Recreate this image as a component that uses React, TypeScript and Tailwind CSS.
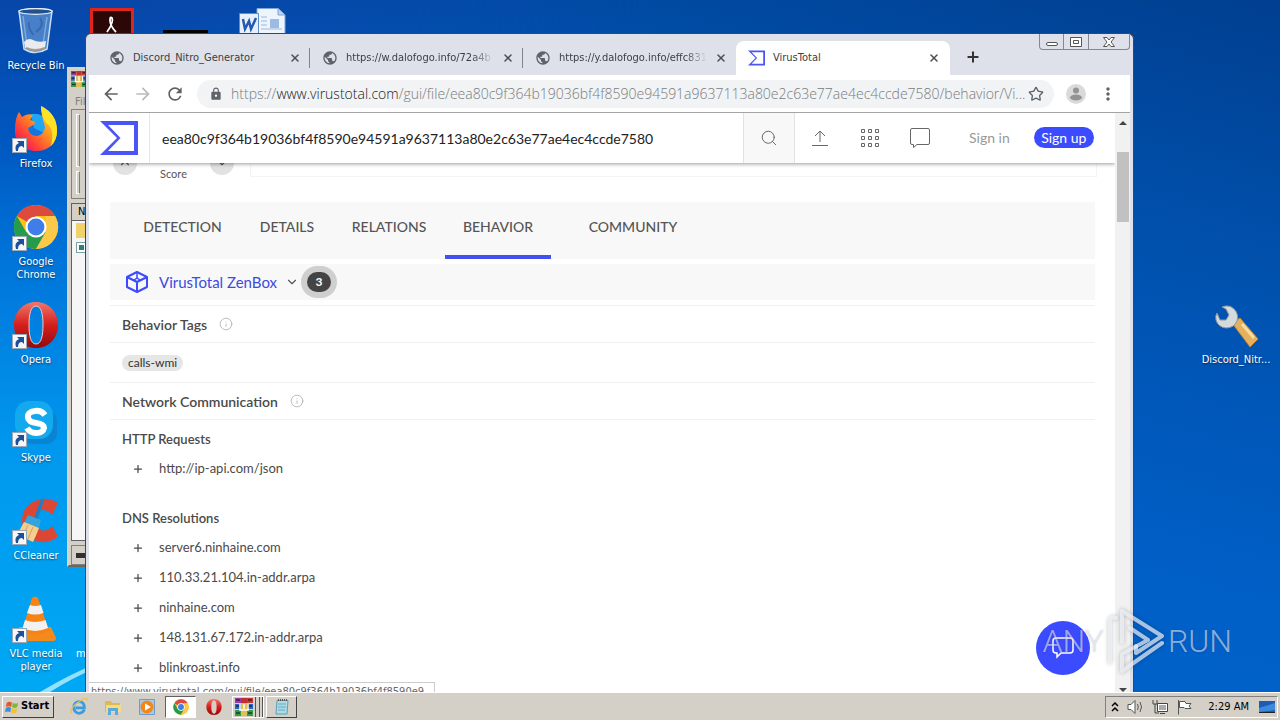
import type { ReactNode } from "react";
import { Star, ChevronDown, ChevronUp, X, Plus, Info, Search } from "lucide-react";
import { MdArrowBack, MdArrowForward, MdRefresh, MdLock, MdMoreVert, MdPublic } from "react-icons/md";

const HASH = "eea80c9f364b19036bf4f8590e94591a9637113a80e2c63e77ae4ec4ccde7580";

function VtLogo({ className }: { className: string }) {
  return (
    <svg viewBox="0 0 38 34" className={className} aria-hidden="true">
      <path d="M0 0H38V34H0L17 17ZM8 4 20.500 17 8 30H34V4Z" fill="#4b55f5" fillRule="evenodd" />
    </svg>
  );
}

function RecycleIcon() {
  return (
    <svg viewBox="0 0 44 46" className="h-[46px] w-11">
      <path d="M5 3 10 41Q21 48 33 41L38 3Q21 -2 5 3Z" fill="#5d93d2" fillOpacity=".75" stroke="#c9def2" strokeWidth="1.500" />
      <ellipse cx="21.500" cy="3.500" rx="16.500" ry="2.800" fill="#24508c" stroke="#e6f0fa" strokeWidth="1.200" />
      <path d="M9 8 13 38M33 9 29 37" stroke="#b6d2ee" strokeOpacity=".5" strokeWidth="1.500" />
      <path d="M26 10Q31 18 22 24M15 14Q14 22 20 27" fill="none" stroke="#2f5f9e" strokeOpacity=".6" strokeWidth="2" />
      <path d="M10 34Q14 29 19 32T32 33L31 40Q21 45 11 40Z" fill="#e9ecef" />
      <path d="M12 40Q21 44 31 40" stroke="#a89a88" strokeWidth="2" fill="none" />
    </svg>
  );
}

function FirefoxIcon() {
  return (
    <svg viewBox="0 0 44 46" className="h-[46px] w-11">
      <defs>
        <linearGradient id="ff" x1="1" y1="0" x2="0.100" y2="0.900">
          <stop offset="0" stopColor="#fff14a" />
          <stop offset=".45" stopColor="#ff9a1e" />
          <stop offset=".8" stopColor="#ff3a3c" />
          <stop offset="1" stopColor="#e8155e" />
        </linearGradient>
      </defs>
      <circle cx="22" cy="22" r="14" fill="#1673e0" />
      <path d="M17 8Q28 6 33 16L30 27 20 22Z" fill="#1fa7f5" />
      <path d="M27 0Q43 8 43 25C43 38 34 45 22 45C9 45 0 36 1 23Q1 12 5 6L8 11Q13 7 19 9L16 14Q22 15 21 18L14 22Q15 30 23 30Q30 29 31 21Q27 8 27 0Z" fill="url(#ff)" />
      <path d="M27 0Q43 8 43 25Q43 34 37 40Q41 22 32 17Q27 9 27 0Z" fill="#ffe226" />
    </svg>
  );
}

function ChromeIcon({ className }: { className: string }) {
  return (
    <svg viewBox="0 0 48 48" className={className}>
      <circle cx="24" cy="24" r="23" fill="#fbc116" />
      <path d="M24 24 4.080 12.500A23 23 0 0 1 43.920 12.500H24Z" fill="#dd4b3e" />
      <path d="M4.080 12.500A23 23 0 0 0 24 47L34 29.750 24 24 14 29.750Z" fill="#249c4c" />
      <path d="M43.920 12.500A23 23 0 0 1 24 47L34 29.750V12.500Z" fill="#fbc94a" />
      <circle cx="24" cy="24" r="11" fill="#fff" />
      <circle cx="24" cy="24" r="8.800" fill="#3f7de8" />
    </svg>
  );
}

function OperaIcon({ className }: { className: string }) {
  return (
    <svg viewBox="0 0 44 46" className={className}>
      <defs>
        <linearGradient id="op" x1="0" y1="0" x2="0" y2="1">
          <stop offset="0" stopColor="#f0766c" />
          <stop offset=".5" stopColor="#d41f1c" />
          <stop offset="1" stopColor="#930a0c" />
        </linearGradient>
      </defs>
      <path
        d="M22 0C35 0 44 10 44 23S35 46 22 46 0 36 0 23 9 0 22 0ZM22 4C16.500 4 15 13 15 23S16.500 42 22 42 29 33 29 23 27.500 4 22 4Z"
        fill="url(#op)"
        fillRule="evenodd"
      />
      <path d="M22 4C16.500 4 15 13 15 23S16.500 42 22 42 29 33 29 23 27.500 4 22 4Z" fill="none" stroke="#f6c9c4" />
    </svg>
  );
}

function SkypeIcon() {
  return (
    <svg viewBox="0 0 44 46" className="h-[46px] w-11">
      <rect x="8" y="10" width="35" height="34" rx="11" fill="#0a84d0" />
      <rect x="1" y="1" width="38" height="38" rx="14" fill="#12a9ee" />
      <path d="M31 15Q27 10 21 11Q13 12 14 18Q15 22 22 23Q30 24 30 28Q29 33 22 33Q16 33 13 28" fill="none" stroke="#fff" strokeWidth="6" />
    </svg>
  );
}

function CCleanerIcon() {
  return (
    <svg viewBox="0 0 44 46" className="h-[46px] w-11">
      <path d="M44 5Q36 0 27 1Q9 5 8 22Q9 42 27 44Q37 45 44 38L38 28Q33 34 27 32Q20 30 20 22Q21 13 28 12Q34 12 38 17Z" fill="#dc4635" />
      <path d="M28 3 22 20" stroke="#1e7fc4" strokeWidth="3.500" strokeLinecap="round" />
      <path d="M14 17 27 22 25 30 10 25Z" fill="#35a3dd" />
      <path d="M10 24 25 30Q22 38 19 44L2 36Q7 31 10 24Z" fill="#f5cf8e" />
      <path d="M14 27 9 38M19 29 14 41" stroke="#d4a45c" />
    </svg>
  );
}

function VlcIcon() {
  return (
    <svg viewBox="0 0 44 46" className="h-[46px] w-11">
      <path d="M5 31H37L42 42Q42 45 39 45H4Q1 45 1 42Z" fill="#f4891c" />
      <path d="M18 2Q21 -1 24 2L35 35Q21 42 8 35Z" fill="#f58316" />
      <path d="M16 9 13 17Q21 20 29.500 17L27 9Q21 11 16 9Z" fill="#f1f1f1" />
      <path d="M11 24 8.500 32Q21 38 34 32L31.500 24Q21 28 11 24Z" fill="#f1f1f1" />
    </svg>
  );
}

function ShortcutBadge() {
  return (
    <svg viewBox="0 0 15 15" className="absolute bottom-0 left-0 size-[15px]">
      <rect x=".5" y=".5" width="14" height="14" fill="#f4f6f8" stroke="#9aa8b8" />
      <path d="M4 13Q2 7 7 5L5 3H12V10L10 8Q6 8 6 13Z" fill="#1c4f9c" />
    </svg>
  );
}

function DesktopIcon({ label, badge, children }: { label: string; badge?: boolean; children: ReactNode }) {
  return (
    <button className="flex h-[98px] w-[72px] flex-col items-center gap-1 text-[11px] leading-[13px] text-white [text-shadow:0_1px_2px_#0008]">
      <span className="relative flex h-12 w-12 shrink-0 items-center justify-center">
        {children}
        {badge && <ShortcutBadge />}
      </span>
      <span className="w-[60px] text-center">{label}</span>
    </button>
  );
}

function RarIcon({ className }: { className: string }) {
  return (
    <svg viewBox="0 0 18 18" className={className}>
      <path d="M0 0h6v5H0z" fill="#9b3aa8" />
      <path d="M0 6h6v5H0z" fill="#2d63c8" />
      <path d="M0 12h6v6H0z" fill="#2f9e46" />
      <path d="M6 0h6v18H6z" fill="#e8bd4f" />
      <path d="M12 0h6v5h-6z" fill="#c23b3b" />
      <path d="M12 6h6v5h-6z" fill="#2d63c8" />
      <path d="M12 12h6v6h-6z" fill="#2f9e46" />
      <path d="M1 2h4M13 2h4M1 8h4M13 8h4M1 15h4M13 15h4" stroke="#111" />
      <path d="M5 6v6h8V6M9 6v5" stroke="#fff" fill="none" strokeWidth="1.500" />
      <path d="M6 0h6v5H6z" fill="#c0302d" />
    </svg>
  );
}

function ArchiveWindow() {
  return (
    <div className="absolute top-[67px] left-[67px] flex h-[500px] w-[30px] flex-col border-2 border-[#d8d4cc] border-b-[#6c6860] bg-[#d4d0c8] pl-0.5">
      <RarIcon className="mt-0.5 size-4 shrink-0" />
      <span className="mt-2 ml-1 text-[11px] leading-[14px] text-[#808080]">File</span>
      <div className="flex h-[90px] flex-col gap-1 border-y border-l border-[#808080] p-1">
        <span className="h-14 w-1 border border-white border-r-[#808080]" />
        <span className="h-6 w-1 border border-white border-r-[#808080]" />
      </div>
      <div className="mt-1 flex flex-1 flex-col border border-[#606060] bg-[#f6f6f6]">
        <span className="h-[17px] border-b border-[#606060] bg-[#d4d0c8] pl-1.5 text-[11px] leading-[16px]">Name</span>
        <span className="mt-0.5 ml-1 h-[15px] w-4 bg-[#efd36a]" />
        <span className="mt-1 ml-1 size-[11px] border border-[#7aa4a4] bg-white p-0.5">
          <span className="block size-[5px] bg-[#2f7f78]" />
        </span>
      </div>
      <div className="mt-1 flex h-5 items-center border border-[#808080] pl-1">
        <span className="h-[5px] w-5 bg-[#303030]" />
      </div>
    </div>
  );
}

function BrowserTab({ title, active, last, faded }: { title: string; active?: boolean; last?: boolean; faded?: boolean }) {
  return (
    <div className={active ? "flex h-[34px] w-[214px] shrink-0 items-center gap-2 rounded-t-lg bg-white pr-2.5 pl-3" : "flex h-[34px] w-[213px] shrink-0 items-center gap-2 pl-3"}>
      {active ? <VtLogo className="h-4 w-[17px] shrink-0" /> : <MdPublic className="size-4 shrink-0 text-[#5f6368]" />}
      <span className={faded ? "min-w-0 flex-1 whitespace-nowrap [mask-image:linear-gradient(to_right,#000_85%,transparent)]" : "min-w-0 flex-1 whitespace-nowrap"}>
        {title}
      </span>
      <button aria-label={`Close ${title}`} className="shrink-0 text-[#4a4d52]">
        <X className="size-3" strokeWidth={3} />
      </button>
      {!active && <span className={last ? "h-5 w-px" : "h-5 w-px bg-[#80858c]"} />}
    </div>
  );
}

function Heading({ children }: { children: string }) {
  return (
    <h2 className="flex items-center gap-3 px-3 text-[14px] font-semibold text-[#4a4a4a]">
      {children}
      <Info className="size-3.5 text-[#b4b4b4]" strokeWidth={1.5} />
    </h2>
  );
}

function Entry({ children }: { children: string }) {
  return (
    <li className="flex h-[30px] items-center gap-[15px] pl-[22px] text-[13px] text-[#4a4a4a]">
      <button aria-label={`Expand ${children}`}>
        <Plus className="size-3" strokeWidth={2.5} />
      </button>
      {children}
    </li>
  );
}

const TABS = [
  { name: "DETECTION", cls: "w-[117px]" },
  { name: "DETAILS", cls: "w-[92px]" },
  { name: "RELATIONS", cls: "w-[112px]" },
  { name: "BEHAVIOR", cls: "w-[106px]", active: true },
  { name: "COMMUNITY", cls: "w-[164px]" },
];

function Page() {
  return (
    <div className="relative flex min-h-0 flex-1">
      <div className="flex min-w-0 flex-1 flex-col overflow-hidden bg-white font-['Lato',sans-serif]">
        <header className="z-10 flex h-[50px] shrink-0 items-stretch bg-white shadow-[0_1px_4px_#0006]">
          <a href="#home" aria-label="VirusTotal" className="flex w-[61px] shrink-0 items-center border-r border-[#e6e6e6] pl-[11px]">
            <VtLogo className="h-[34px] w-[38px]" />
          </a>
          <input aria-label="Search" defaultValue={HASH} className="min-w-0 flex-1 px-3 text-[14px] text-[#222] outline-none" />
          <button aria-label="Search" className="flex w-[52px] shrink-0 items-center justify-center border-x border-[#e2e2e2] bg-[#f8f8f8] text-[#666]">
            <Search className="size-[18px]" strokeWidth={1.3} />
          </button>
          <nav className="flex w-[320px] shrink-0 items-center text-[#666]">
            <button aria-label="Upload" className="flex w-[50px] justify-center">
              <svg viewBox="0 0 18 18" className="size-[18px]" fill="none" stroke="currentColor">
                <path d="M9 13V2M4 7 9 2 14 7M1 16.500H17" />
              </svg>
            </button>
            <button aria-label="Apps" className="flex w-[50px] justify-center">
              <svg viewBox="0 0 20 20" className="size-5" fill="none" stroke="currentColor">
                <path d="M1.500 1.500h3v3h-3zM8.500 1.500h3v3h-3zM15.500 1.500h3v3h-3zM1.500 8.500h3v3h-3zM8.500 8.500h3v3h-3zM15.500 8.500h3v3h-3zM1.500 15.500h3v3h-3zM8.500 15.500h3v3h-3zM15.500 15.500h3v3h-3z" />
              </svg>
            </button>
            <button aria-label="Comments" className="flex w-[50px] justify-center">
              <svg viewBox="0 0 20 20" className="size-5" fill="none" stroke="currentColor">
                <path d="M2 .5H18Q19.500 .5 19.500 2V15Q19.500 16.500 18 16.500H7L3.500 19.500V16.500H2Q.5 16.500 .5 15V2Q.5 .5 2 .5Z" />
              </svg>
            </button>
            <div className="ml-6 flex items-center gap-6 pb-0.5 text-[14px]">
              <a href="#signin" className="text-[#999]">Sign in</a>
              <a href="#signup" className="flex h-[21px] w-[60px] items-center justify-center rounded-full bg-[#3b4bff] text-white">Sign up</a>
            </div>
          </nav>
        </header>

        <section className="flex h-[39px] shrink-0 pr-[18px] pl-6">
          <div className="flex w-[137px] items-start justify-between pr-4">
            <button aria-label="Previous" className="-mt-3 flex size-6 items-center justify-center rounded-full bg-[#e2e2e2] text-[#555]">
              <ChevronUp className="size-3.5" />
            </button>
            <span className="mt-1 text-[11px] leading-[14px] text-[#555]">Score</span>
            <button aria-label="Next" className="-mt-3 flex size-6 items-center justify-center rounded-full bg-[#e2e2e2] text-[#555]">
              <ChevronDown className="size-3.5" />
            </button>
          </div>
          <div className="h-3.5 flex-1 border-x border-b border-[#f4f4f4]" />
        </section>

        <main className="mr-5 ml-[21px] flex flex-col">
          <nav className="flex h-[57px] bg-[#f8f8f8] pl-[14px] text-[14px] font-medium text-[#555]">
            {TABS.map((t) => (
              <a
                key={t.name}
                href={`#${t.name.toLowerCase()}`}
                className={`${t.cls} flex shrink-0 items-center justify-center border-b-4 pb-1 ${t.active ? "border-[#4350f0]" : "border-transparent"}`}
              >
                {t.name}
              </a>
            ))}
          </nav>
          <div className="mt-[5px] flex h-9 items-center bg-[#f8f8f8] pl-4">
            <svg viewBox="0 0 22 22" className="size-[22px]" fill="none" stroke="#3b4bff" strokeWidth="2" strokeLinejoin="round">
              <path d="M11 1 21 6V16L11 21 1 16V6ZM1 6 11 11 21 6M11 11V21" />
              <path d="M11 1V8M8 9 11 7 14 9" strokeWidth="1.500" />
            </svg>
            <button className="ml-[11px] flex items-center gap-2 text-[15px] text-[#3b4bdf]">
              VirusTotal ZenBox
              <ChevronDown className="size-3.5 text-[#555]" />
            </button>
            <span className="ml-0.5 flex h-8 w-9 items-center justify-center rounded-full bg-[#cfcfcf]">
              <span className="flex h-5 w-6 items-center justify-center rounded-full bg-[#444] text-[12px] font-bold text-white">3</span>
            </span>
          </div>
          <div className="mt-[5px] flex h-[37px] items-center border-t border-[#f0f0f0]">
            <Heading>Behavior Tags</Heading>
          </div>
          <div className="flex h-[41px] items-center border-y border-[#f0f0f0] px-3">
            <span className="rounded-full bg-[#e6e6e6] px-1.5 text-[12px] leading-4 text-[#333]">calls-wmi</span>
          </div>
          <div className="flex h-[37px] items-center border-b border-[#f0f0f0]">
            <Heading>Network Communication</Heading>
          </div>
          <h3 className="mt-[9px] px-3 text-[13px] leading-5 font-semibold text-[#4a4a4a]">HTTP Requests</h3>
          <ul className="mt-[5px]">
            <Entry>http://ip-api.com/json</Entry>
          </ul>
          <h3 className="mt-6 px-3 text-[13px] leading-5 font-semibold text-[#4a4a4a]">DNS Resolutions</h3>
          <ul className="mt-[5px] flex flex-col">
            <Entry>server6.ninhaine.com</Entry>
            <Entry>110.33.21.104.in-addr.arpa</Entry>
            <Entry>ninhaine.com</Entry>
            <Entry>148.131.67.172.in-addr.arpa</Entry>
            <Entry>blinkroast.info</Entry>
          </ul>
        </main>
      </div>

      <div className="flex w-[15px] shrink-0 flex-col items-center bg-[#f1f1f1] py-1">
        <svg viewBox="0 0 8 4" className="mt-1 h-1 w-2"><path d="M4 0 8 4H0Z" fill="#444" /></svg>
        <div className="mt-[27px] h-[70px] w-3 bg-[#c1c1c1]" />
        <svg viewBox="0 0 8 4" className="mt-auto -mb-1 h-1 w-2"><path d="M0 0H8L4 4Z" fill="#444" /></svg>
      </div>

      <button aria-label="Open chat" className="absolute right-10 bottom-[17px] flex size-[54px] items-center justify-center rounded-full bg-[#3b4bff]">
        <svg viewBox="0 0 22 22" className="size-[22px]" fill="none" stroke="#fff" strokeWidth="1.500">
          <path d="M4 1H18Q21 1 21 4V13Q21 16 18 16H9L5 20V16H4Q1 16 1 13V4Q1 1 4 1Z" />
        </svg>
      </button>
      <div className="absolute bottom-0 left-0 h-2.5 w-[346px] overflow-hidden border-t border-r border-[#ccc] bg-white pl-0.5 text-[11px] leading-[17px] whitespace-nowrap text-[#666]">
        https://www.virustotal.com/gui/file/eea80c9f364b19036bf4f8590e9…
      </div>
    </div>
  );
}

function Browser() {
  return (
    <div className="absolute top-[33px] right-[146px] bottom-0 left-[85px] flex flex-col overflow-hidden rounded-t-md border border-b-0 border-[#3f4650] bg-[#dfe1ea] px-[3px]">
      <div className="flex h-[41px] shrink-0 items-end pl-2 text-[11px] text-[#3c4043]">
        <BrowserTab title="Discord_Nitro_Generator" />
        <BrowserTab title="https://w.dalofogo.info/72a4b" faded />
        <BrowserTab title="https://y.dalofogo.info/effc831" last faded />
        <BrowserTab title="VirusTotal" active />
        <button aria-label="New tab" className="mb-2.5 ml-[15px] text-[#333]">
          <Plus className="size-4" strokeWidth={3} />
        </button>
        <div className="ml-auto flex h-4 self-start rounded-b border border-t-0 border-[#85888e] text-[#555]">
          <button aria-label="Minimize" className="flex w-6 items-center justify-center border-r border-[#85888e] pt-1">
            <span className="h-1 w-3 rounded-sm border border-[#555] bg-white" />
          </button>
          <button aria-label="Restore" className="flex w-[25px] items-center justify-center border-r border-[#85888e]">
            <svg viewBox="0 0 12 10" className="h-2.5 w-3" fill="#fff" stroke="#555">
              <path d="M.5 .5H11.500V9.500H.5ZM3.500 3.500H8.500V6.500H3.500Z" />
            </svg>
          </button>
          <button aria-label="Close" className="flex w-10 items-center justify-center">
            <svg viewBox="0 0 12 10" className="h-2.5 w-3" fill="#fff" stroke="#555">
              <path d="M.5 .5H4L6 3 8 .5H11.500L8 5 11.500 9.500H8L6 7 4 9.500H.5L4 5Z" />
            </svg>
          </button>
        </div>
      </div>
      <div className="flex h-[38px] shrink-0 items-center border-b border-[#a4a4a4] bg-white px-3 text-[#5f6368]">
        <button aria-label="Back"><MdArrowBack className="size-5" /></button>
        <button aria-label="Forward" className="ml-3 text-[#bbb]"><MdArrowForward className="size-5" /></button>
        <button aria-label="Reload" className="ml-3"><MdRefresh className="size-5" /></button>
        <div className="ml-3 flex h-7 min-w-0 flex-1 items-center rounded-full bg-[#f1f3f4] pr-2.5 pl-3">
          <MdLock className="size-3.5 shrink-0" />
          <span className="ml-2 min-w-0 flex-1 whitespace-nowrap font-['Open_Sans',sans-serif] text-[14px] font-light text-[#777c82]">
            https://<span className="text-[#202124]">www.virustotal.com</span>/gui/file/{HASH}/behavior/Vi...
          </span>
          <Star className="size-4 shrink-0" />
        </div>
        <button aria-label="Profile" className="ml-3">
          <svg viewBox="0 0 20 20" className="size-5">
            <circle cx="10" cy="10" r="10" fill="#dadada" />
            <circle cx="10" cy="6.500" r="3" fill="#949494" />
            <ellipse cx="10" cy="13.500" rx="6" ry="3" fill="#949494" />
          </svg>
        </button>
        <button aria-label="Menu" className="ml-3"><MdMoreVert className="size-5" /></button>
      </div>
      <Page />
    </div>
  );
}

function Watermark() {
  return (
    <div aria-hidden="true" className="pointer-events-none absolute right-12 bottom-[18px] flex items-center gap-0.5 font-['Roboto',sans-serif] text-[32px] leading-none font-light text-[#e8eef8]/60 [text-shadow:0_0_2px_#0003]">
      <span>ANY</span>
      <svg viewBox="0 0 60 66" className="h-[66px] w-[60px] drop-shadow-[0_0_2px_#0005]" fill="none" stroke="#f0f4fa" strokeOpacity=".7" strokeWidth="4" strokeLinejoin="round" strokeLinecap="round">
        <path d="M4 54V14Q4 8 10 10" />
        <path d="M16 34V3L56 28 30 45V38" />
        <path d="M56 35 16 63V46L42 32 24 20" />
      </svg>
      <span>RUN</span>
    </div>
  );
}

function Taskbar() {
  return (
    <footer className="flex h-7 shrink-0 items-center border-t border-white bg-[#d4d0c8] px-0.5 text-[11px] text-black">
      <button className="flex h-[22px] w-[52px] items-center gap-0.5 border border-white border-r-[#404040] border-b-[#404040] pl-0.5 text-[11px] font-bold">
        <svg viewBox="0 0 16 16" className="size-3.5 shrink-0">
          <path d="M2 3Q5 1 8 3L7 8Q4 6 1 8Z" fill="#e4572e" />
          <path d="M9 3Q12 5 15 3L14 8Q11 10 8 8Z" fill="#7db83a" />
          <path d="M1 9Q4 7 7 9L6 14Q3 12 0 14Z" fill="#3d8fd6" />
          <path d="M8 9Q11 11 14 9L13 14Q10 16 7 14Z" fill="#f2c230" />
        </svg>
        Start
      </button>
      <button aria-label="Internet Explorer" className="ml-[13px] flex w-6 justify-center">
        <svg viewBox="0 0 20 20" className="size-[18px]" fill="none">
          <path d="M16 13Q14 17 10 17Q4 16 4 10Q5 4 10 4Q16 4 16 11H6" stroke="#3b9de0" strokeWidth="3" />
          <path d="M2 17Q-2 13 9 5T19 3" stroke="#efc04a" strokeWidth="1.500" />
        </svg>
      </button>
      <button aria-label="Explorer" className="ml-2.5 flex w-6 justify-center">
        <svg viewBox="0 0 18 16" className="h-4 w-[18px]">
          <path d="M1 2H7L8 4H16V13H1Z" fill="#dfb94c" />
          <path d="M2 6H17V13H2Z" fill="#f3dc86" />
          <path d="M4 9H14V16H11V12H7V16H4Z" fill="#5aaade" />
        </svg>
      </button>
      <button aria-label="Media Player" className="ml-2.5 flex w-6 justify-center">
        <svg viewBox="0 0 16 16" className="size-4">
          <path d="M.5 .5H15.500V15.500H.5Z" fill="#a6cbe8" stroke="#6e9cc4" />
          <circle cx="8" cy="8" r="6.500" fill="#f2861d" />
          <path d="M6 4.500 12 8 6 11.500Z" fill="#fff" />
        </svg>
      </button>
      <button aria-label="Chrome" className="ml-1.5 flex h-[22px] w-[31px] items-center justify-center border border-[#606060] border-r-white border-b-white bg-white">
        <ChromeIcon className="size-4" />
      </button>
      <button aria-label="Opera" className="ml-1.5 flex w-6 justify-center"><OperaIcon className="size-4" /></button>
      <button aria-label="WinRAR" className="ml-1.5 flex h-[22px] items-center border border-white pl-0.5">
        <RarIcon className="size-[18px]" />
        <span className="ml-0.5 flex h-5 w-2 justify-between border-x border-[#555]"><span className="ml-[3px] w-px bg-[#555]" /></span>
      </button>
      <button aria-label="Notepad" className="ml-0.5 flex h-[22px] w-[31px] items-center justify-center border border-white border-r-[#404040] border-b-[#404040]">
        <svg viewBox="0 0 14 16" className="h-4 w-3.5">
          <path d="M2 1.500H13L12 15H1Z" fill="#a9dbe8" stroke="#5b9fb4" />
          <path d="M3 5H11M3 8H11M3 11H10" stroke="#6fa9ba" />
          <path d="M3 1H13" stroke="#555" strokeDasharray="1 1" strokeWidth="2" />
        </svg>
      </button>
      <div className="ml-auto flex h-[22px] items-center border border-[#808080] border-r-white border-b-white pr-0.5 pl-[5px]">
        <svg viewBox="0 0 8 10" className="h-2.5 w-2" fill="none" stroke="#000" strokeWidth="1.500"><path d="M1 4 4 1 7 4M1 9 4 6 7 9" /></svg>
        <svg viewBox="0 0 17 16" className="ml-2 h-4 w-[17px]" fill="none" stroke="#555">
          <path d="M1 5.500H4L8 1.500V14.500L4 10.500H1Z" fill="#fff" /><path d="M10.500 5Q12 8 10.500 11M13 3Q16 8 13 13" />
        </svg>
        <svg viewBox="0 0 16 16" className="ml-2 size-4" fill="#fff" stroke="#444">
          <path d="M5.500 4.500H15.500V12.500H5.500ZM8 14.500H13" /><path d="M1 1V5H5V1M3 5V14H7" fill="none" /><path d="M7 6H14V11H7Z" fill="#aaa" stroke="none" />
        </svg>
        <svg viewBox="0 0 16 16" className="ml-2 size-4" fill="#fff" stroke="#555">
          <path d="M2.500 1V15.500" /><path d="M3.500 2.500H9L10 4.500H15L13 7 15 9.500H9L8 8.500H3.500Z" />
        </svg>
        <time className="ml-4 leading-4">2:29 AM</time>
        <svg viewBox="0 0 16 14" className="ml-2.5 h-3.5 w-4">
          <path d="M0 1H16V12H0Z" fill="#1b5cb4" /><path d="M0 8 16 3V10L0 12Z" fill="#3c8ae0" /><path d="M0 12.500H16" stroke="#222" />
        </svg>
      </div>
    </footer>
  );
}

export default function App() {
  return (
    <div className="flex h-screen flex-col overflow-hidden font-['DejaVu_Sans_Condensed','DejaVu_Sans',sans-serif]">
      <div className="relative min-h-0 flex-1 overflow-hidden bg-[linear-gradient(195deg,#003f90_0%,#0050ac_25%,#0060c8_60%,#0066cc_100%)]">
        <div className="absolute inset-y-0 left-0 w-1/2 bg-[linear-gradient(180deg,#0846a8_0%,#0057c0_20%,#0075da_38%,#0098ee_65%,#00a8f4_100%)] [mask-image:linear-gradient(to_right,#000_20%,transparent)]" />
        <svg viewBox="0 0 80 40" className="absolute bottom-0 left-5 h-10 w-20">
          <path d="M20 40Q50 22 80 10V14Q52 26 30 40Z" fill="#b8f0ff" fillOpacity=".8" />
        </svg>
        <div className="absolute top-[7px] left-0 flex flex-col">
          <DesktopIcon label="Recycle Bin"><RecycleIcon /></DesktopIcon>
          <DesktopIcon label="Firefox" badge><FirefoxIcon /></DesktopIcon>
          <DesktopIcon label="Google Chrome" badge><ChromeIcon className="size-[46px]" /></DesktopIcon>
          <DesktopIcon label="Opera" badge><OperaIcon className="h-[46px] w-11" /></DesktopIcon>
          <DesktopIcon label="Skype" badge><SkypeIcon /></DesktopIcon>
          <DesktopIcon label="CCleaner" badge><CCleanerIcon /></DesktopIcon>
          <DesktopIcon label="VLC media player" badge><VlcIcon /></DesktopIcon>
        </div>
        <span className="absolute bottom-8 left-[76px] text-[11px] leading-[13px] text-white">m</span>
        <svg viewBox="0 0 44 44" className="absolute top-2 left-[90px] size-11">
          <path d="M1.500 1.500H42.500V42H1.500Z" fill="#2b0708" stroke="#e0251b" strokeWidth="3" />
          <path d="M17 24Q24 14 22 10Q20 8 20 12Q20 18 26 24" fill="none" stroke="#fff" strokeWidth="1.800" />
        </svg>
        <div className="absolute top-[30px] left-[163px] h-4 w-[45px] bg-black" />
        <svg viewBox="0 0 48 40" className="absolute top-2 left-[239px] h-10 w-12">
          <path d="M18 .5H39L46 7V40H18Z" fill="#eef4fc" stroke="#7fa6d6" />
          <path d="M39 .5V7H46" fill="#bcd3ee" stroke="#7fa6d6" />
          <path d="M22 9H28M22 13H28M22 17H28M22 21H43" stroke="#9cb9dd" />
          <path d="M31 11H40V20H31Z" fill="#9bbbe2" />
          <path d="M.5 5.500H19.500V26H.5Z" fill="#e7effa" stroke="#5f8dc8" />
          <path d="M4 11 6 21 10 13 12 21 17 10" fill="none" stroke="#2459b0" strokeWidth="2.500" />
        </svg>
        <ArchiveWindow />
        <Browser />
        <button className="absolute top-[304px] right-2 flex w-[72px] flex-col items-center text-[11px] leading-[13px] text-white [text-shadow:0_1px_2px_#0008]">
          <svg viewBox="0 0 48 48" className="size-12">
            <path d="M20 19 28 14 46 35 38 43Z" fill="#e6b05c" stroke="#b8863c" />
            <path d="M30 20 42 34" stroke="#f6dca0" strokeWidth="3" />
            <path d="M10 3Q17 0 22 5Q27 10 25 17Q22 24 14 24Q6 23 4 16Q3 12 5 9L8 16L14 16L17 11L14 5Z" fill="#d4dade" stroke="#8f989e" />
          </svg>
          <span className="mt-px whitespace-nowrap">Discord_Nitr...</span>
        </button>
        <Watermark />
      </div>
      <Taskbar />
    </div>
  );
}
